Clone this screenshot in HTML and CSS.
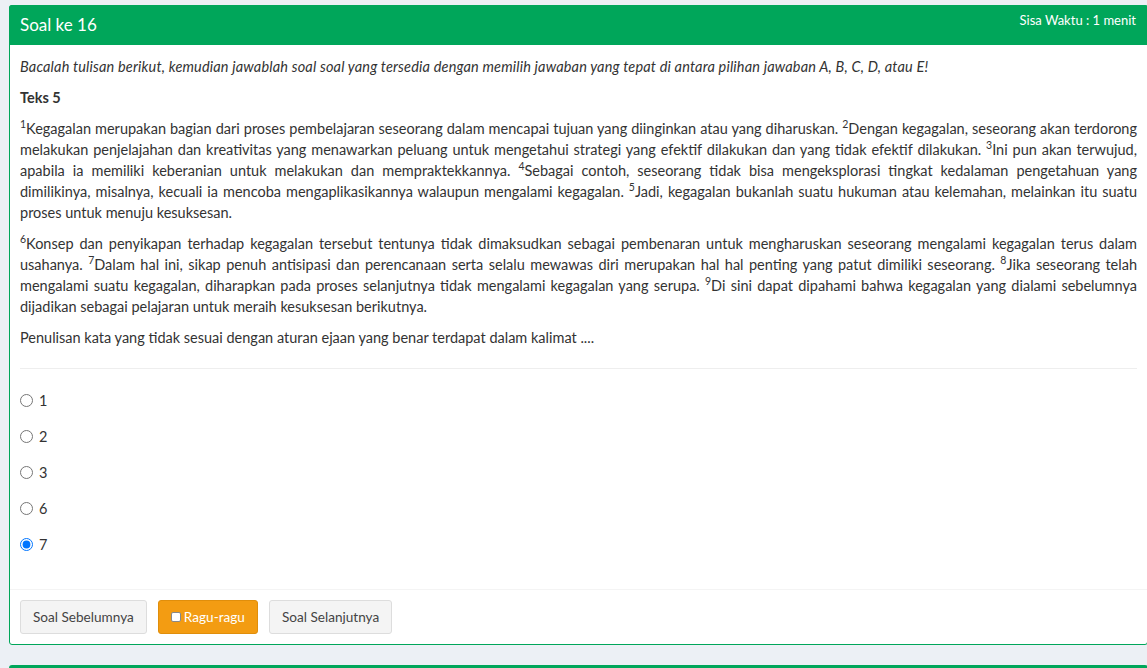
FILE: index.html
```html
<!DOCTYPE html>
<html lang="id">
<head>
<meta charset="utf-8">
<title>Soal ke 16</title>
<link rel="stylesheet" href="styles.css">
</head>
<body>
<div class="wrapper">
  <div class="card">
    <div class="card-header">
      <h3 class="card-title">Soal ke 16</h3>
      <div class="timer">Sisa Waktu : 1 menit</div>
    </div>
    <div class="card-body">
      <p class="instruction">Bacalah tulisan berikut, kemudian jawablah soal soal yang tersedia dengan memilih jawaban yang tepat di antara pilihan jawaban A, B, C, D, atau E!</p>
      <p class="teks-title">Teks 5</p>
      <p class="text"><sup>1</sup>Kegagalan merupakan bagian dari proses pembelajaran seseorang dalam mencapai tujuan yang diinginkan atau yang diharuskan. <sup>2</sup>Dengan kegagalan, seseorang akan terdorong melakukan penjelajahan dan kreativitas yang menawarkan peluang untuk mengetahui strategi yang efektif dilakukan dan yang tidak efektif dilakukan. <sup>3</sup>Ini pun akan terwujud, apabila ia memiliki keberanian untuk melakukan dan mempraktekkannya. <sup>4</sup>Sebagai contoh, seseorang tidak bisa mengeksplorasi tingkat kedalaman pengetahuan yang dimilikinya, misalnya, kecuali ia mencoba mengaplikasikannya walaupun mengalami kegagalan. <sup>5</sup>Jadi, kegagalan bukanlah suatu hukuman atau kelemahan, melainkan itu suatu proses untuk menuju kesuksesan.</p>
      <p class="text"><sup>6</sup>Konsep dan penyikapan terhadap kegagalan tersebut tentunya tidak dimaksudkan sebagai pembenaran untuk mengharuskan seseorang mengalami kegagalan terus dalam usahanya. <sup>7</sup>Dalam hal ini, sikap penuh antisipasi dan perencanaan serta selalu mewawas diri merupakan hal hal penting yang patut dimiliki seseorang. <sup>8</sup>Jika seseorang telah mengalami suatu kegagalan, diharapkan pada proses selanjutnya tidak mengalami kegagalan yang serupa. <sup>9</sup>Di sini dapat dipahami bahwa kegagalan yang dialami sebelumnya dijadikan sebagai pelajaran untuk meraih kesuksesan berikutnya.</p>
      <p class="question">Penulisan kata yang tidak sesuai dengan aturan ejaan yang benar terdapat dalam kalimat ....</p>
      <hr class="divider">
      <div class="options">
        <label class="option"><input type="radio" name="jawab" value="1"><span>1</span></label>
        <label class="option"><input type="radio" name="jawab" value="2"><span>2</span></label>
        <label class="option"><input type="radio" name="jawab" value="3"><span>3</span></label>
        <label class="option"><input type="radio" name="jawab" value="6"><span>6</span></label>
        <label class="option"><input type="radio" name="jawab" value="7" checked><span>7</span></label>
      </div>
    </div>
    <div class="card-footer">
      <button class="btn btn-default" type="button">Soal Sebelumnya</button>
      <button class="btn btn-warning" type="button"><span class="check"></span>Ragu-ragu</button>
      <button class="btn btn-default" type="button">Soal Selanjutnya</button>
    </div>
  </div>
  <div class="card card-next"></div>
</div>
</body>
</html>
```
FILE: styles.css
```css
html, body {
  margin: 0;
  padding: 0;
  background: #ecf0f5;
  overflow: hidden;
}
body {
  font-family: Lato, "Noto Sans", sans-serif;
  font-size: 14.5px;
  line-height: 21px;
  color: #333;
}
.wrapper {
  padding: 5px 0 0 9px;
}
.card {
  background: #fff;
  border: 1px solid #00a65a;
  border-radius: 3px;
  margin-right: -1px;
  margin-bottom: 20px;
}
.card-header {
  background: #00a65a;
  color: #fff;
  height: 40px;
  margin: -1px -1px 0 -1px;
  padding: 0 12px 0 11px;
  display: flex;
  justify-content: space-between;
  align-items: flex-start;
  border-radius: 3px 3px 0 0;
}
.card-title {
  margin: 0;
  font-size: 17px;
  font-weight: 400;
  line-height: 40px;
}
.timer {
  font-size: 13px;
  line-height: 30px;
}
.card-body {
  padding: 11px 10px 0 10px;
}
.card-body p {
  margin: 0 0 10px 0;
}
.instruction {
  font-style: italic;
  letter-spacing: 0.17px;
}
.teks-title {
  font-weight: 700;
}
.text {
  text-align: justify;
}
sup {
  font-size: 10.5px;
  line-height: 0;
  position: relative;
  vertical-align: baseline;
  top: -6px;
}
.divider {
  border: 0;
  border-top: 1px solid #eee;
  margin: 20px 0 13px 0;
}
.options {
  display: flex;
  flex-direction: column;
  padding-bottom: 27px;
}
.option {
  display: flex;
  align-items: center;
  height: 36px;
  gap: 6px;
}
.option input {
  margin: 0;
  width: 13px;
  height: 13px;
}
.card-footer {
  border-top: 1px solid #f4f4f4;
  padding: 10px;
  display: flex;
  gap: 11px;
}
.btn {
  font-family: inherit;
  font-size: 13.6px;
  height: 34px;
  padding: 0 12px;
  border-radius: 3px;
  border: 1px solid #ddd;
  background: #f4f4f4;
  color: #444;
  display: flex;
  align-items: center;
}
.btn-warning {
  background: #f39c12;
  border-color: #e08e0b;
  color: #fff;
}
.check {
  width: 8px;
  height: 8px;
  background: #fff;
  border: 1px solid #888;
  border-radius: 2px;
  margin-right: 3px;
}
.card-next {
  border: 0;
  border-top: 3px solid #00a65a;
  height: 40px;
}
```
